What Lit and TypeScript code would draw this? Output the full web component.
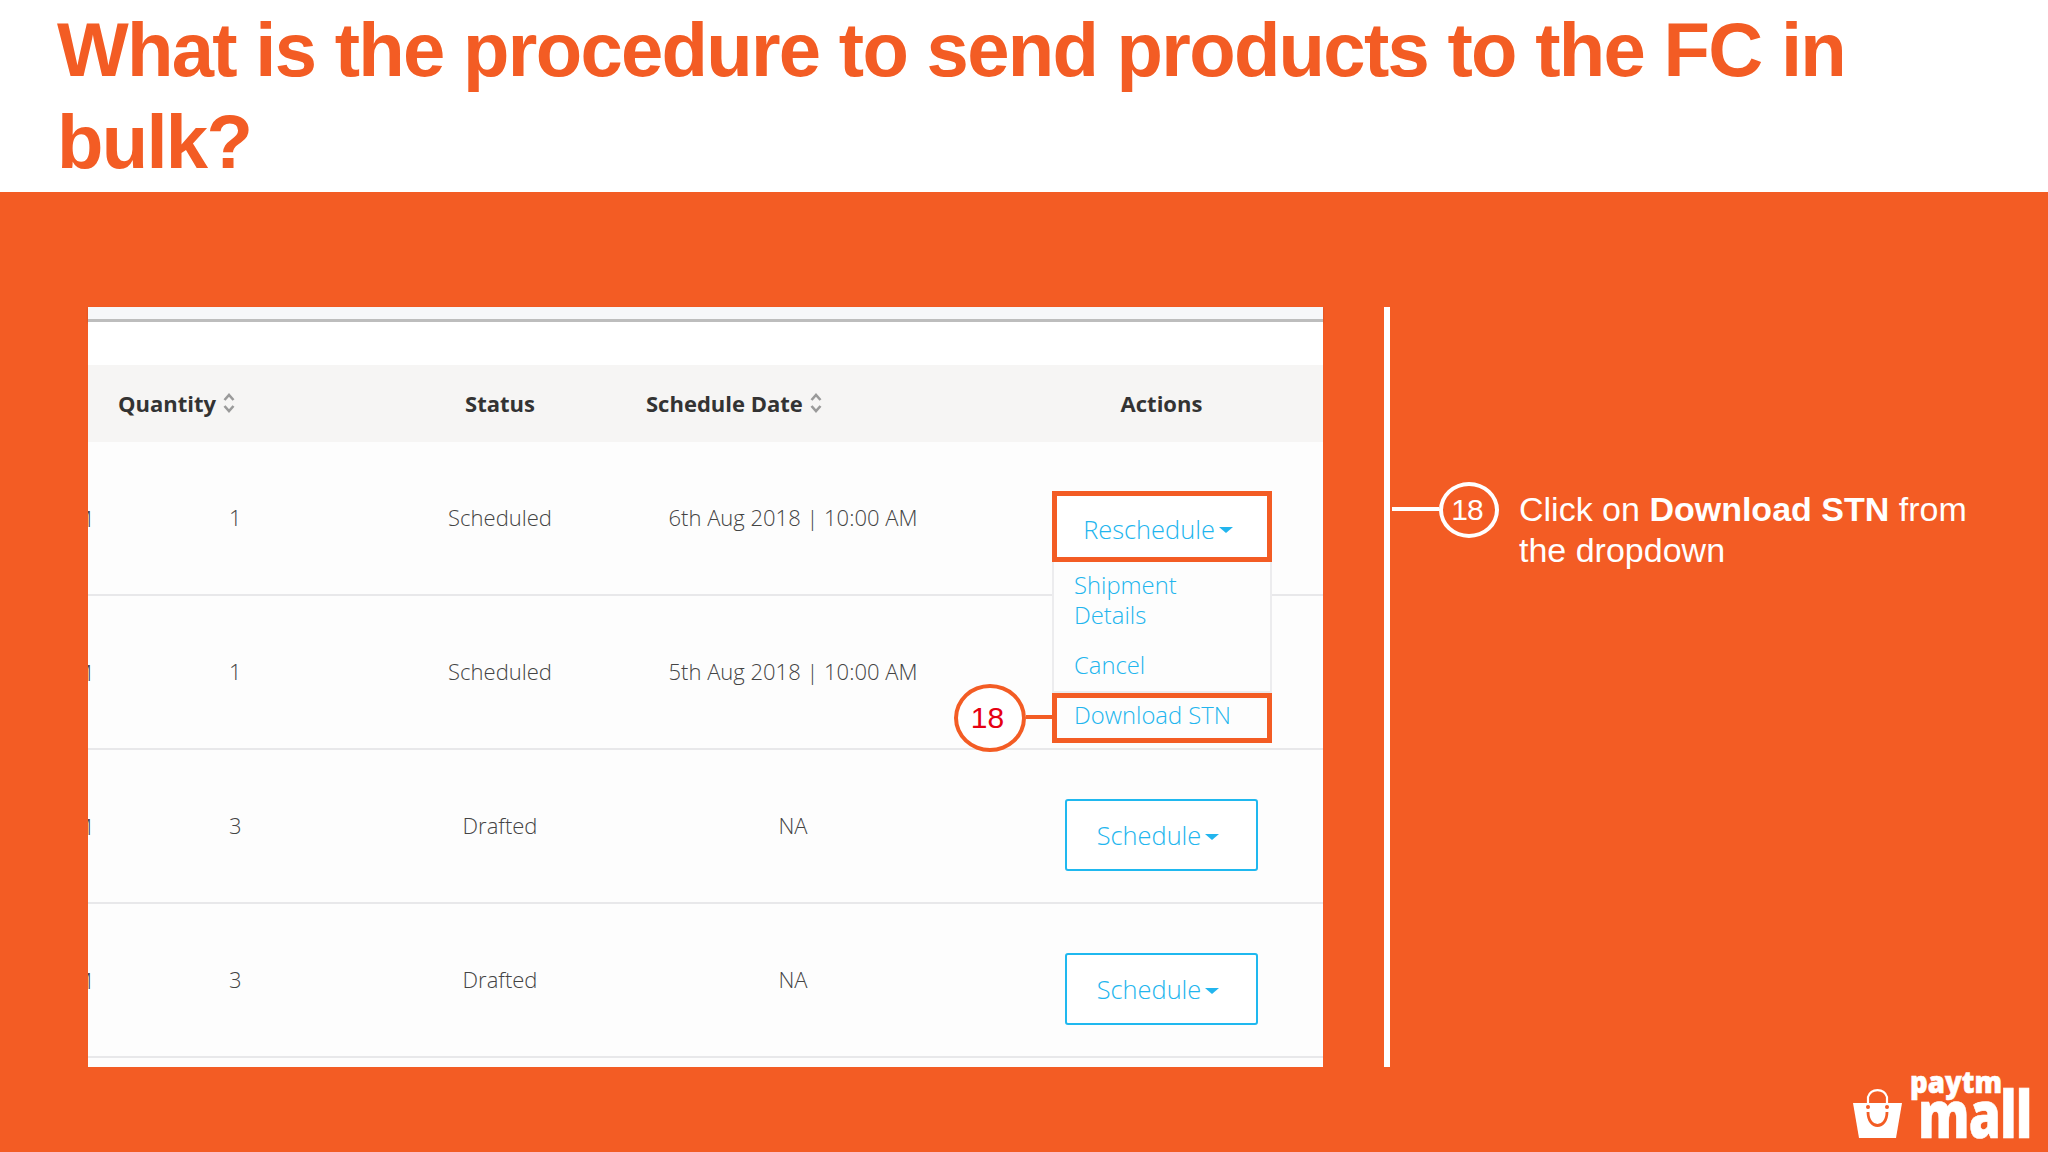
import { LitElement, html, css } from "lit";
import { customElement } from "lit/decorators.js";

const sortIcon = html`<svg class="sort" width="12" height="22" viewBox="0 0 12 22" fill="none" stroke="#9a9a9a" stroke-width="2.6"><path d="M1.5 8 L6 3 L10.5 8"/><path d="M1.5 14 L6 19 L10.5 14"/></svg>`;

const rows = [
  { qty: "1", status: "Scheduled", date: "6th Aug 2018 | 10:00 AM", action: "Reschedule" },
  { qty: "1", status: "Scheduled", date: "5th Aug 2018 | 10:00 AM", action: "" },
  { qty: "3", status: "Drafted", date: "NA", action: "Schedule" },
  { qty: "3", status: "Drafted", date: "NA", action: "Schedule" },
];

@customElement("app-root")
export class AppRoot extends LitElement {
  static styles = css`
    :host { display: block; width: 2048px; height: 1152px; overflow: hidden; background: #fff; font-family: "Liberation Sans", Arial, sans-serif; position: relative; }
    .head { height: 192px; box-sizing: border-box; padding: 4px 0 0 57px; background: #fff; }
    h1 { margin: 0; width: 1900px; font-size: 76px; letter-spacing: -1.7px; line-height: 92px; font-weight: 700; color: #f35c24; }
    .main { height: 960px; box-sizing: border-box; background: #f35c24; padding: 115px 0 0 88px; display: flex; align-items: flex-start; }
    .card { width: 1235px; height: 760px; background: #fdfdfd; position: relative; display: flex; flex-direction: column; font-family: "Open Sans", sans-serif; }
    .topbar { height: 12px; background: #f6f7f9; border-bottom: 3px solid #bdbdbd; box-shadow: 0 1px 2px rgba(0,0,0,.18); flex: none; }
    .gap { height: 43px; background: #fff; flex: none; }
    .grid { display: grid; grid-template-columns: 312px 200px 386px 337px; align-items: center; }
    .thead { height: 77px; background: #f6f5f4; font-weight: 700; font-size: 22px; color: #333; flex: none; padding-bottom: 1px; box-sizing: border-box; }
    .thead .q { padding-left: 30px; display: flex; align-items: center; gap: 7px; }
    .thead .d { padding-left: 46px; display: flex; align-items: center; gap: 7px; }
    .c { text-align: center; }
    .thead .act { padding-left: 14px; }
    .row { height: 154px; box-sizing: border-box; border-bottom: 2px solid #e8e8ea; font-size: 22px; font-weight: 300; color: #444; flex: none; position: relative; }
    .row > div { height: 100%; display: flex; align-items: center; justify-content: center; padding-bottom: 2px; box-sizing: border-box; }
    .row .qty { justify-content: flex-start; padding-left: 141px; position: relative; overflow: hidden; }
    .row .actions { padding: 0 0 0 14px; }
    .qty .stub { position: absolute; left: -15px; top: 50%; transform: translateY(-50%); }
    .btn { box-sizing: border-box; width: 193px; height: 72px; margin-top: 18px; border: 2px solid #1fb8ef; border-radius: 3px; background: #fff; color: #22b5ee; font-size: 25.4px; font-weight: 300; display: flex; align-items: center; justify-content: center; gap: 4px; padding-right: 7px; }
    .caret { width: 0; height: 0; border-left: 7px solid transparent; border-right: 7px solid transparent; border-top: 6px solid #22b5ee; margin-top: 3px; }
    .menu { position: absolute; left: 964px; top: 255px; width: 220px; box-sizing: border-box; height: 131px; background: #fdfdfd; border: 2px solid #ececee; border-top: none; color: #22b5ee; font-size: 23.8px; line-height: 30px; font-weight: 300; padding: 8px 20px; }
    .menu div { width: 130px; }
    .menu .cancel { margin-top: 20px; }
    .hl { position: absolute; box-sizing: border-box; border: 5px solid #f35c24; left: 964px; width: 220px; }
    .hl.a { top: 184px; height: 71px; background: #fff; color: #22b5ee; font-size: 25.4px; font-weight: 300; display: flex; align-items: center; justify-content: center; padding: 4px 8px 0 0; gap: 4px; }
    .hl.b { top: 386px; height: 50px; background: #fdfdfd; color: #22b5ee; font-size: 23.8px; font-weight: 300; line-height: 34px; padding-left: 17px; }
    .badge { position: absolute; left: 866px; top: 377px; width: 72px; height: 68px; box-sizing: border-box; border: 4px solid #f35c24; border-radius: 50%; background: #fff; color: #e60012; font: 400 30px "Liberation Sans", sans-serif; display: flex; align-items: center; justify-content: center; padding-right: 5px; }
    .link { position: absolute; left: 938px; top: 408px; width: 26px; height: 4px; background: #f35c24; }
    .rule { width: 6px; height: 760px; margin-left: 61px; background: #fff; flex: none; }
    .note { margin: 175px 0 0 2px; display: flex; align-items: flex-start; color: #fff; }
    .conn { width: 47px; height: 4px; background: #fff; margin-top: 25px; flex: none; }
    .num { width: 60px; height: 56px; box-sizing: border-box; border: 4px solid #fff; border-radius: 50%; display: flex; align-items: center; justify-content: center; font-size: 30px; letter-spacing: -1px; padding-right: 4px; flex: none; }
    .txt { width: 470px; margin: 7px 0 0 20px; font-size: 34px; line-height: 41px; }
    .logo { position: absolute; left: 1853px; top: 1072px; width: 180px; height: 70px; color: #fff; }
    .logo svg { position: absolute; left: 0; top: 14px; }
    .p { position: absolute; left: 57px; top: -5px; font: 800 30px/30px "Open Sans", sans-serif; transform-origin: left top; transform: scaleX(.92); -webkit-text-stroke: .6px #fff; }
    .m { position: absolute; left: 65px; top: 7px; font: 800 66px/66px "Open Sans", sans-serif; letter-spacing: -1px; transform-origin: left top; transform: scaleX(.78); -webkit-text-stroke: .6px #fff; }
  `;

  render() {
    return html`
      <div class="head"><h1>What is the procedure to send products to the FC in bulk?</h1></div>
      <div class="main">
        <div class="card">
          <div class="topbar"></div>
          <div class="gap"></div>
          <div class="grid thead">
            <div class="q">Quantity ${sortIcon}</div>
            <div class="c">Status</div>
            <div class="d">Schedule Date ${sortIcon}</div>
            <div class="c act">Actions</div>
          </div>
          ${rows.map(r => html`
            <div class="grid row">
              <div class="qty"><span class="stub">M</span>${r.qty}</div>
              <div>${r.status}</div>
              <div>${r.date}</div>
              <div class="actions">${r.action ? html`<span class="btn">${r.action}<i class="caret"></i></span>` : ""}</div>
            </div>`)}
          <div class="menu">
            <div>Shipment Details</div>
            <div class="cancel">Cancel</div>
          </div>
          <div class="hl a">Reschedule<i class="caret"></i></div>
          <div class="hl b">Download STN</div>
          <div class="link"></div>
          <div class="badge">18</div>
        </div>
        <div class="rule"></div>
        <div class="note">
          <div class="conn"></div>
          <div class="num">18</div>
          <div class="txt">Click on <b>Download STN</b> from the dropdown</div>
        </div>
      </div>
      <div class="logo">
        <svg width="50" height="52" viewBox="0 0 50 52">
          <path d="M15 19 V11 A10 10 0 0 1 34 11 V19" fill="none" stroke="#fff" stroke-width="2.2"/>
          <path d="M0 17 H49 L43 52 H6 Z" fill="#fff"/>
          <path d="M15 26 C15 44 34 44 34 26" fill="none" stroke="#f35c24" stroke-width="2.8"/>
          <circle cx="15" cy="21" r="2" fill="#f35c24"/><circle cx="34" cy="21" r="2" fill="#f35c24"/>
        </svg>
        <span class="p">paytm</span>
        <span class="m">mall</span>
      </div>
    `;
  }
}
